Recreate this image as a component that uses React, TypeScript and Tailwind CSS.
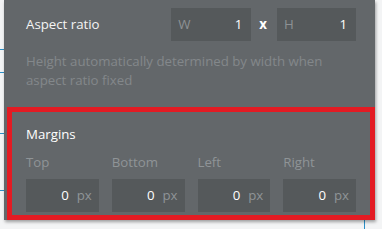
const font = { fontFamily: '"Open Sans", "Liberation Sans", sans-serif' };

function NumBox({ label, value }: { label?: string; value: string }) {
  return (
    <div className="flex h-[33px] w-[80px] items-center justify-between bg-[#55595b] pl-[7px] pr-[9px]">
      <span className="text-[#8d9194]">{label}</span>
      <span className="text-white">{value}</span>
    </div>
  );
}

function MarginInput({ label }: { label: string }) {
  return (
    <div>
      <p className="leading-[19px] text-[#8f9497]">{label}</p>
      <div className="mt-[7px] flex h-[33px] items-center justify-end bg-[#55595b] pr-[7px]">
        <span className="text-white">0</span>
        <span className="ml-[8px] text-[#8f9497]">px</span>
      </div>
    </div>
  );
}

export default function App() {
  return (
    <div className="relative h-[229px] w-[382px] overflow-hidden bg-[#f3f4f5] text-[13.25px]" style={font}>
      {/* canvas guides behind the panel */}
      <div className="absolute left-0 top-[49px] h-px w-[10px] bg-[#2b90c8]" />
      <div className="absolute left-0 top-[72px] h-px w-[10px] bg-[#2b90c8]" />
      <div className="absolute left-0 top-[133px] h-px w-[10px] bg-[#2b90c8]" />
      <div className="absolute left-0 top-[190px] h-px w-[10px] bg-[#2b90c8]" />
      <div className="absolute left-[364px] top-[200px] h-[40px] w-px bg-[#2b90c8]" />

      {/* property panel */}
      <div className="absolute left-[4px] top-0 h-[220px] w-[371px] bg-[#63676a] pl-[22px] pr-[19px] pt-[8px] shadow-[1px_2px_3px_rgba(0,0,0,0.35)]">
        <div className="flex h-[33px] items-center">
          <span className="flex-1 text-[#f4f4f4]">Aspect ratio</span>
          <NumBox label="W" value="1" />
          <span className="ml-[8px] mr-[10px] font-bold text-white">x</span>
          <div className="flex h-[33px] w-[79px] items-center justify-between bg-[#55595b] pl-[7px] pr-[9px]">
            <span className="text-[#8d9194]">H</span>
            <span className="text-white">1</span>
          </div>
        </div>

        <p className="mt-[11px] leading-[19px] text-[#83888b]">
          Height automatically determined by width when aspect ratio fixed
        </p>

        <p className="mt-[35px] leading-[19px] text-white">Margins</p>
        <div className="mt-[9px] grid grid-cols-4 gap-x-[13px]">
          <MarginInput label="Top" />
          <MarginInput label="Bottom" />
          <MarginInput label="Left" />
          <MarginInput label="Right" />
        </div>

        {/* highlight box */}
        <div className="pointer-events-none absolute left-[3px] top-[107px] h-[113px] w-[368px] border-[5px] border-[#e31b23]" />
      </div>
    </div>
  );
}
